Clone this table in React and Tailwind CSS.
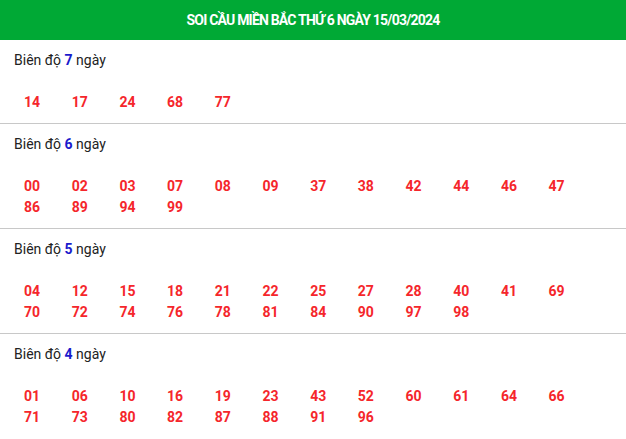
import React from "react";

const sections = [
  { days: 7, nums: ["14", "17", "24", "68", "77"] },
  { days: 6, nums: ["00", "02", "03", "07", "08", "09", "37", "38", "42", "44", "46", "47", "86", "89", "94", "99"] },
  { days: 5, nums: ["04", "12", "15", "18", "21", "22", "25", "27", "28", "40", "41", "69", "70", "72", "74", "76", "78", "81", "84", "90", "97", "98"] },
  { days: 4, nums: ["01", "06", "10", "16", "19", "23", "43", "52", "60", "61", "64", "66", "71", "73", "80", "82", "87", "88", "91", "96"] },
];

function Section({ days, nums }) {
  return (
    <div className="pt-[10px] pb-[10px] border-b border-[#c8c8c8] last:border-b-0">
      <div className="pl-[14px] h-[21px] leading-[21px] text-[14px] text-[#222]">
        Biên độ <span className="font-bold text-[#1a1acc]">{days}</span> ngày
      </div>
      <div className="mt-[21px] pl-[24px] grid grid-cols-[repeat(12,47.7px)]">
        {nums.map((n, i) => (
          <span key={i} className="h-[21px] leading-[21px] text-[14px] font-bold text-[#f5262b]">{n}</span>
        ))}
      </div>
    </div>
  );
}

export default function App() {
  return (
    <div className="w-[626px] bg-white" style={{ fontFamily: "Roboto, 'Noto Sans', sans-serif" }}>
      <div className="h-[40px] bg-[#00a935] flex items-center justify-center">
        <h1 className="text-white font-bold text-[14px] tracking-[-0.8px]">SOI CẦU MIỀN BẮC THỨ 6 NGÀY 15/03/2024</h1>
      </div>
      {sections.map((s) => (
        <Section key={s.days} {...s} />
      ))}
    </div>
  );
}
